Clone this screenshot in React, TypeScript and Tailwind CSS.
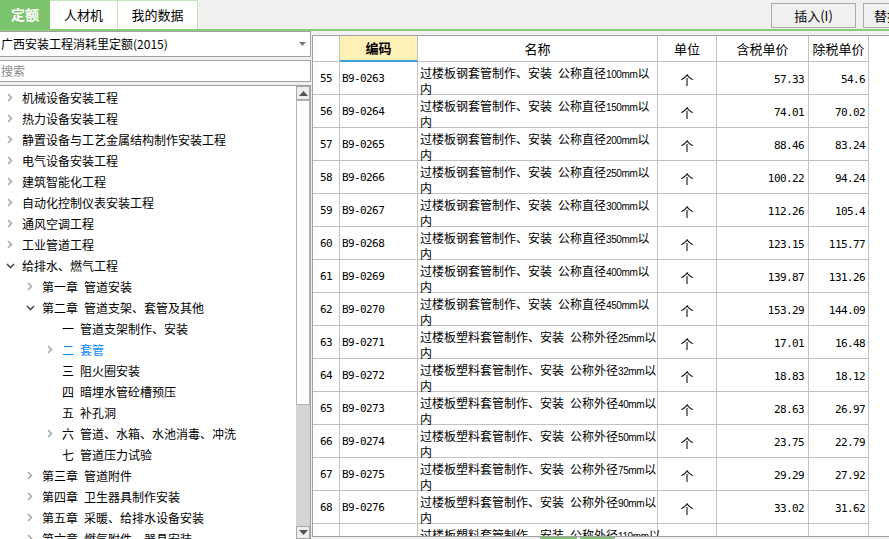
import React from "react";

type TreeItem = { label: string; level: number; arrow?: "right" | "down"; active?: boolean };

const sp = "\u2002";

const tree: TreeItem[] = [
  { label: "机械设备安装工程", level: 0, arrow: "right" },
  { label: "热力设备安装工程", level: 0, arrow: "right" },
  { label: "静置设备与工艺金属结构制作安装工程", level: 0, arrow: "right" },
  { label: "电气设备安装工程", level: 0, arrow: "right" },
  { label: "建筑智能化工程", level: 0, arrow: "right" },
  { label: "自动化控制仪表安装工程", level: 0, arrow: "right" },
  { label: "通风空调工程", level: 0, arrow: "right" },
  { label: "工业管道工程", level: 0, arrow: "right" },
  { label: "给排水、燃气工程", level: 0, arrow: "down" },
  { label: `第一章${sp}管道安装`, level: 1, arrow: "right" },
  { label: `第二章${sp}管道支架、套管及其他`, level: 1, arrow: "down" },
  { label: `一${sp}管道支架制作、安装`, level: 2 },
  { label: `二${sp}套管`, level: 2, arrow: "right", active: true },
  { label: `三${sp}阻火圈安装`, level: 2 },
  { label: `四${sp}暗埋水管砼槽预压`, level: 2 },
  { label: `五${sp}补孔洞`, level: 2 },
  { label: `六${sp}管道、水箱、水池消毒、冲洗`, level: 2, arrow: "right" },
  { label: `七${sp}管道压力试验`, level: 2 },
  { label: `第三章${sp}管道附件`, level: 1, arrow: "right" },
  { label: `第四章${sp}卫生器具制作安装`, level: 1, arrow: "right" },
  { label: `第五章${sp}采暖、给排水设备安装`, level: 1, arrow: "right" },
  { label: `第六章${sp}燃气附件、器具安装`, level: 1, arrow: "right" },
];

const steel = `过楼板钢套管制作、安装${sp}公称直径`;
const plastic = `过楼板塑料套管制作、安装${sp}公称外径`;

const rows = [
  { no: 55, code: "B9-0263", name: steel, size: "100mm", tax: "57.33", net: "54.6" },
  { no: 56, code: "B9-0264", name: steel, size: "150mm", tax: "74.01", net: "70.02" },
  { no: 57, code: "B9-0265", name: steel, size: "200mm", tax: "88.46", net: "83.24" },
  { no: 58, code: "B9-0266", name: steel, size: "250mm", tax: "100.22", net: "94.24" },
  { no: 59, code: "B9-0267", name: steel, size: "300mm", tax: "112.26", net: "105.4" },
  { no: 60, code: "B9-0268", name: steel, size: "350mm", tax: "123.15", net: "115.77" },
  { no: 61, code: "B9-0269", name: steel, size: "400mm", tax: "139.87", net: "131.26" },
  { no: 62, code: "B9-0270", name: steel, size: "450mm", tax: "153.29", net: "144.09" },
  { no: 63, code: "B9-0271", name: plastic, size: "25mm", tax: "17.01", net: "16.48" },
  { no: 64, code: "B9-0272", name: plastic, size: "32mm", tax: "18.83", net: "18.12" },
  { no: 65, code: "B9-0273", name: plastic, size: "40mm", tax: "28.63", net: "26.97" },
  { no: 66, code: "B9-0274", name: plastic, size: "50mm", tax: "23.75", net: "22.79" },
  { no: 67, code: "B9-0275", name: plastic, size: "75mm", tax: "29.29", net: "27.92" },
  { no: 68, code: "B9-0276", name: plastic, size: "90mm", tax: "33.02", net: "31.62" },
  { no: 69, code: "B9-0277", name: plastic, size: "110mm", tax: "", net: "" },
];

function Chevron({ dir }: { dir: "right" | "down" }) {
  return dir === "right" ? (
    <svg width="8" height="9" viewBox="0 0 8 9">
      <path d="M2 1 L5.5 4.5 L2 8" fill="none" stroke="#a9a9a9" strokeWidth="1.6" />
    </svg>
  ) : (
    <svg width="9" height="8" viewBox="0 0 9 8">
      <path d="M1 2 L4.5 5.5 L8 2" fill="none" stroke="#4a4a4a" strokeWidth="1.6" />
    </svg>
  );
}

function Triangle({ up }: { up?: boolean }) {
  return (
    <svg width="9" height="5" viewBox="0 0 9 5">
      <path d={up ? "M0 5 L4.5 0 L9 5 Z" : "M0 0 L4.5 5 L9 0 Z"} fill="#555" />
    </svg>
  );
}

const cell = "border-r border-b border-[#c2c2c2] shrink-0";
const mono = "font-['DejaVu_Sans_Mono',monospace] text-[11px] tracking-[-0.6px]";

export default function App() {
  return (
    <div className="w-[889px] h-[539px] overflow-hidden bg-[#f0f0f0] flex flex-col font-['Noto_Sans_CJK_SC','Noto_Sans',sans-serif] text-[12px] text-black">
      {/* Top tabs */}
      <div className="h-[31px] shrink-0 flex border-b-2 border-[#88cc76]">
        <div className="w-[50px] bg-[#7cc46b] text-white font-bold text-[14px] flex items-center justify-center">定额</div>
        <div className="w-[68px] bg-white border-r border-t border-[#bfe6b3] text-[13px] flex items-center justify-center">人材机</div>
        <div className="w-[80px] bg-white border-r border-t border-[#bfe6b3] text-[13px] flex items-center justify-center">我的数据</div>
        <div className="flex-1" />
        <div className="w-[118px] shrink-0 overflow-hidden flex gap-[7px] pt-[3px]">
          <button className="w-[85px] h-[25px] shrink-0 border border-[#a9a9a9] bg-[#f0f0f0] text-[13px]">插入(I)</button>
          <button className="w-[85px] h-[25px] shrink-0 border border-[#a9a9a9] bg-[#f0f0f0] text-[13px] text-left pl-[10px]">替换(R)</button>
        </div>
      </div>

      <div className="flex flex-1 min-h-0">
        {/* Left panel */}
        <div className="w-[311px] shrink-0 flex flex-col">
          <div className="h-[26px] shrink-0 bg-white border-y border-r border-[#a0a0a0] flex items-center justify-between pl-[1px] pr-[4px]">
            <span className="text-[12px]">广西安装工程消耗里定额(2015)</span>
            <svg width="7" height="4" viewBox="0 0 7 4">
              <path d="M0 0 L3.5 4 L7 0 Z" fill="#777" />
            </svg>
          </div>
          <div className="h-[22px] mt-[3px] shrink-0 bg-white border-y border-r border-[#a0a0a0] flex items-center pl-[1px] text-[#8a8a8a]">搜索</div>
          <div className="mt-[3px] flex-1 min-h-0 bg-white border-t border-r border-[#a0a0a0] flex">
            <div className="flex-1 overflow-hidden pt-[1px]">
              {tree.map((t) => (
                <div key={t.label} className="h-[21px] flex items-center whitespace-nowrap" style={{ paddingLeft: 4 + t.level * 20 }}>
                  <div className="w-[18px] shrink-0 flex items-center pl-[2px]">{t.arrow && <Chevron dir={t.arrow} />}</div>
                  <span className={t.active ? "text-[#0a8cf2]" : ""}>{t.label}</span>
                </div>
              ))}
            </div>
            <div className="w-[14px] shrink-0 flex flex-col bg-[#d4d4d4]">
              <div className="h-[14px] shrink-0 bg-[#eeeeee] border border-[#a8a8a8] flex items-center justify-center">
                <Triangle up />
              </div>
              <div className="h-[305px] shrink-0 bg-white border border-[#b4b4b4]" />
              <div className="flex-1" />
              <div className="h-[13px] shrink-0 bg-[#eeeeee] border border-[#a8a8a8] flex items-center justify-center">
                <Triangle />
              </div>
            </div>
          </div>
        </div>

        {/* Right panel */}
        <div className="flex-1 ml-[1px] mt-[4px] flex flex-col min-w-0">
          <div className="h-[502px] shrink-0 bg-white border border-r-0 border-[#a0a0a0] overflow-hidden">
            {/* Header */}
            <div className="flex h-[26px] text-[13px]">
              <div className={`${cell} w-[27px]`} />
              <div className="w-[78px] shrink-0 border-r border-[#c2c2c2] border-b-2 border-b-[#3a9fd9] bg-[#fff0b5] font-bold flex items-center justify-center">编码</div>
              <div className={`${cell} w-[240px] flex items-center justify-center`}>名称</div>
              <div className={`${cell} w-[59px] flex items-center justify-center`}>单位</div>
              <div className={`${cell} w-[92px] flex items-center justify-center`}>含税单价</div>
              <div className={`${cell} w-[60px] flex items-center justify-center`}>除税单价</div>
            </div>
            {/* Rows */}
            {rows.map((r) => (
              <div key={r.no} className="flex h-[33px]">
                <div className={`${cell} w-[27px] flex items-center justify-center pt-[2px] ${mono}`}>{r.no}</div>
                <div className={`${cell} w-[78px] flex items-center pl-[2px] pt-[2px] ${mono}`}>{r.code}</div>
                <div className={`${cell} w-[240px] pl-[2px] pt-[4px] leading-[14px]`}>
                  <div className="whitespace-nowrap">
                    {r.name}
                    <span className="font-['Liberation_Sans',sans-serif] text-[10px] tracking-[-0.4px]">{r.size}</span>以
                  </div>
                  <div>内</div>
                </div>
                <div className={`${cell} w-[59px] flex items-center justify-center pt-[3px] text-[13px]`}>个</div>
                <div className={`${cell} w-[92px] flex items-center justify-end pr-[4px] pt-[4px] ${mono}`}>{r.tax}</div>
                <div className={`${cell} w-[60px] flex items-center justify-end pr-[3px] pt-[4px] ${mono}`}>{r.net}</div>
              </div>
            ))}
          </div>
          <div className="flex gap-[3px] pl-[228px]">
            <div className="w-[37px] h-[2px] bg-[#7cc46b]" />
            <div className="w-[35px] h-[2px] bg-[#7cc46b]" />
          </div>
        </div>
      </div>
    </div>
  );
}
